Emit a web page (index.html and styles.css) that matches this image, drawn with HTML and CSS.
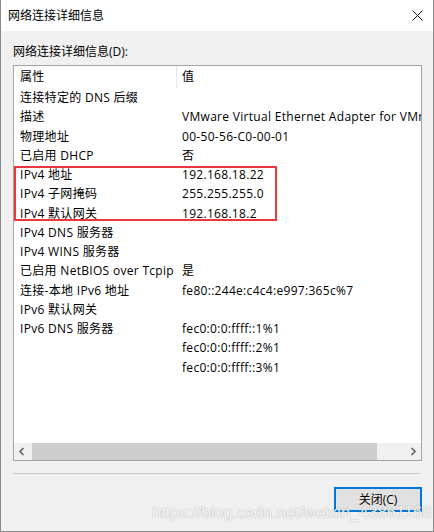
FILE: index.html
```html
<!DOCTYPE html>
<html lang="zh-CN">
<head>
<meta charset="utf-8">
<title>网络连接详细信息</title>
<link rel="stylesheet" href="styles.css">
</head>
<body>
<div class="window">
  <div class="titlebar">
    <span class="title">网络连接详细信息</span>
    <svg class="close" width="11" height="11" viewBox="0 0 11 11"><path d="M0.5 0.5 L10.5 10.5 M10.5 0.5 L0.5 10.5" stroke="#1a1a1a" stroke-width="1" fill="none"/></svg>
  </div>
  <div class="content">
    <div class="label">网络连接详细信息(D):</div>
    <div class="listbox">
      <div class="list">
        <div class="row head"><div class="cell c1">属性</div><div class="cell c2">值</div></div>
        <div class="row"><div class="cell c1">连接特定的 DNS 后缀</div><div class="cell c2"></div></div>
        <div class="row"><div class="cell c1">描述</div><div class="cell c2">VMware Virtual Ethernet Adapter for VMnet8</div></div>
        <div class="row"><div class="cell c1">物理地址</div><div class="cell c2">00-50-56-C0-00-01</div></div>
        <div class="row"><div class="cell c1">已启用 DHCP</div><div class="cell c2">否</div></div>
        <div class="row"><div class="cell c1">IPv4 地址</div><div class="cell c2">192.168.18.22</div></div>
        <div class="row"><div class="cell c1">IPv4 子网掩码</div><div class="cell c2">255.255.255.0</div></div>
        <div class="row"><div class="cell c1">IPv4 默认网关</div><div class="cell c2">192.168.18.2</div></div>
        <div class="row"><div class="cell c1">IPv4 DNS 服务器</div><div class="cell c2"></div></div>
        <div class="row"><div class="cell c1">IPv4 WINS 服务器</div><div class="cell c2"></div></div>
        <div class="row"><div class="cell c1">已启用 NetBIOS over Tcpip</div><div class="cell c2">是</div></div>
        <div class="row"><div class="cell c1">连接-本地 IPv6 地址</div><div class="cell c2">fe80::244e:c4c4:e997:365c%7</div></div>
        <div class="row"><div class="cell c1">IPv6 默认网关</div><div class="cell c2"></div></div>
        <div class="row"><div class="cell c1">IPv6 DNS 服务器</div><div class="cell c2">fec0:0:0:ffff::1%1</div></div>
        <div class="row"><div class="cell c1"></div><div class="cell c2">fec0:0:0:ffff::2%1</div></div>
        <div class="row"><div class="cell c1"></div><div class="cell c2">fec0:0:0:ffff::3%1</div></div>
      </div>
      <div class="hscroll">
        <div class="sbtn"><svg width="17" height="17" viewBox="0 0 17 17"><path d="M9.5 5 L6 8.5 L9.5 12" stroke="#606060" stroke-width="1.6" fill="none"/></svg></div>
        <div class="track"><div class="thumb"></div></div>
        <div class="sbtn"><svg width="17" height="17" viewBox="0 0 17 17"><path d="M7.5 5 L11 8.5 L7.5 12" stroke="#606060" stroke-width="1.6" fill="none"/></svg></div>
      </div>
      <div class="highlight"></div>
    </div>
    <div class="separator"></div>
    <button class="btn">关闭(C)</button>
  </div>
  <div class="watermark">https://blog.csdn.net/weixin_43861166</div>
</div>
</body>
</html>
```
FILE: styles.css
```css
html, body {
  margin: 0;
  padding: 0;
  background: #f0f0f0;
}

.window {
  position: relative;
  width: 434px;
  height: 532px;
  box-sizing: border-box;
  border: 1px solid #8a8a8a;
  border-top: none;
  background: #f0f0f0;
  display: flex;
  flex-direction: column;
  overflow: hidden;
  font-family: "Open Sans", "Noto Sans CJK SC", sans-serif;
  font-size: 12px;
  color: #000;
}

.titlebar {
  flex: none;
  height: 31px;
  background: #fff;
  display: flex;
  align-items: center;
  justify-content: space-between;
  padding: 0 10px 0 7px;
}

.title {
  line-height: 16px;
}

.close {
  display: block;
}

.content {
  flex: 1;
  display: flex;
  flex-direction: column;
  padding: 13px 11px 0 12px;
}

.label {
  line-height: 16px;
  margin-bottom: 5px;
}

.listbox {
  position: relative;
  height: 396px;
  box-sizing: border-box;
  border: 1px solid #a5a5a5;
  background: #fff;
  display: flex;
  flex-direction: column;
}

.list {
  flex: 1;
  overflow: hidden;
  letter-spacing: 0.3px;
}

.row {
  display: grid;
  grid-template-columns: 163px 1fr;
  height: 19.25px;
  line-height: 19.25px;
  white-space: nowrap;
}

.row.head {
  height: 22px;
  line-height: 22px;
}

.cell {
  overflow: hidden;
  box-sizing: border-box;
}

.c1 {
  padding-left: 6px;
}

.c2 {
  padding-left: 5px;
}

.head .c1 {
  border-right: 1px solid #e5e5e5;
}

.hscroll {
  flex: none;
  height: 17px;
  display: flex;
  background: #f0f0f0;
}

.sbtn {
  width: 17px;
  height: 17px;
  flex: none;
}

.sbtn svg {
  display: block;
}

.track {
  flex: 1;
  display: flex;
}

.thumb {
  margin-left: 1px;
  width: 345px;
  background: #cdcdcd;
}

.highlight {
  position: absolute;
  left: 0;
  top: 100px;
  width: 263px;
  height: 55px;
  box-sizing: border-box;
  border: 2px solid #e8383d;
}

.separator {
  margin-top: 12px;
  margin-right: 2px;
  height: 1px;
  background: #c8c8c8;
}

.btn {
  align-self: flex-end;
  margin-top: 13px;
  width: 88px;
  height: 25px;
  box-sizing: border-box;
  border: 2px solid #0078d7;
  background: #e1e1e1;
  font-family: "Open Sans", "Noto Sans CJK SC", sans-serif;
  font-size: 12px;
  color: #000;
  padding: 0;
  line-height: 19px;
}

.watermark {
  position: absolute;
  left: 151px;
  top: 503px;
  font-family: "Liberation Sans", sans-serif;
  font-size: 16.5px;
  color: rgba(255, 255, 255, 0.9);
  text-shadow: 0 0 1px rgba(0, 0, 0, 0.25), 0 0 2px rgba(0, 0, 0, 0.12);
  white-space: nowrap;
  pointer-events: none;
}
```
